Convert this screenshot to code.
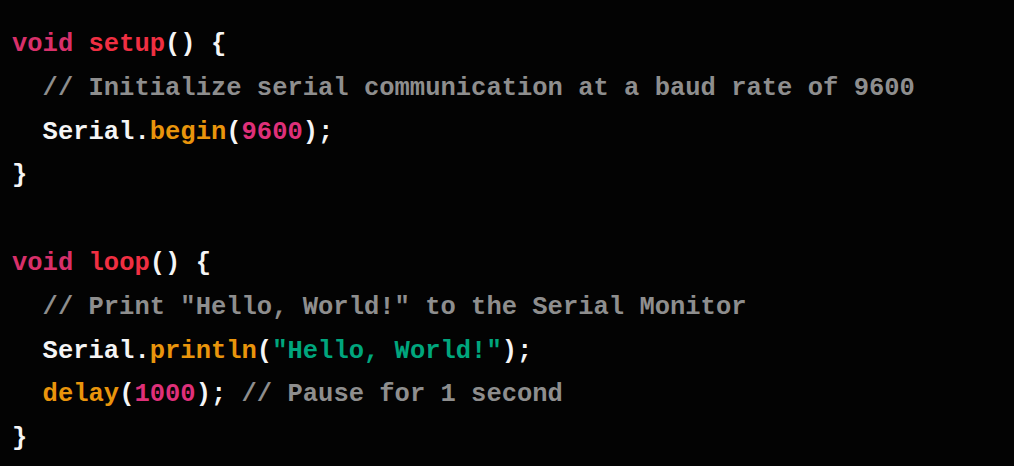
import React from "react";

type Tok = [string, string];

const W = "text-[#f5f5f5]";
const C = "text-[#8e8e8e]";
const K = "text-[#d8306a]";
const T = "text-[#f02f42]";
const B = "text-[#e9950c]";
const N = "text-[#df3079]";
const S = "text-[#00a67d]";

const lines: Tok[][] = [
  [["void", K], [" ", W], ["setup", T], ["() {", W]],
  [["  // Initialize serial communication at a baud rate of 9600", C]],
  [["  Serial.", W], ["begin", B], ["(", W], ["9600", N], [");", W]],
  [["}", W]],
  [],
  [["void", K], [" ", W], ["loop", T], ["() {", W]],
  [["  // Print \"Hello, World!\" to the Serial Monitor", C]],
  [["  Serial.", W], ["println", B], ["(", W], ["\"Hello, World!\"", S], [");", W]],
  [["  ", W], ["delay", B], ["(", W], ["1000", N], [");", W], [" // Pause for 1 second", C]],
  [["}", W]],
];

export default function App() {
  return (
    <div className="w-[1014px] h-[466px] bg-[#030303] overflow-hidden">
      <pre className="pl-[12px] pt-[23px] font-['Liberation_Mono',monospace] font-bold text-[25.5px] leading-[43.8px] whitespace-pre">
        {lines.map((line, i) => (
          <div key={i} className="h-[43.8px]">
            {line.map(([text, cls], j) => (
              <span key={j} className={cls}>
                {text}
              </span>
            ))}
          </div>
        ))}
      </pre>
    </div>
  );
}
